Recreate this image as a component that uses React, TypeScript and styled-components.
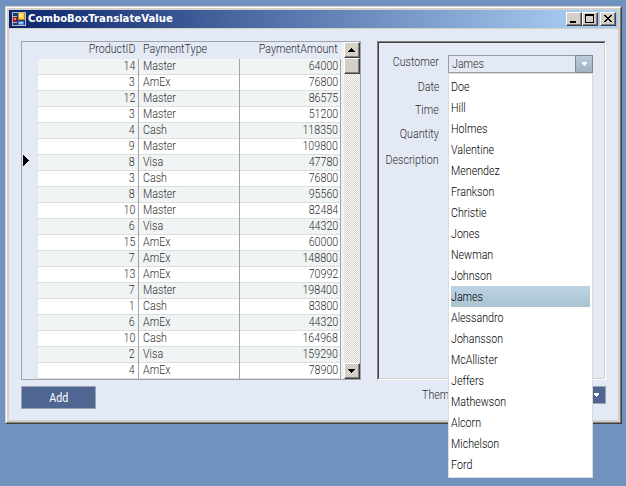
import React from 'react';
import styled, { createGlobalStyle, css } from 'styled-components';

const GlobalStyle = createGlobalStyle`
  * { box-sizing: border-box; }
  body {
    margin: 0;
    background: #7092bf;
    font-family: Roboto, "Liberation Sans", sans-serif;
    font-size: 12px;
    font-weight: 300;
    color: #303030;
    overflow: hidden;
  }
`;

const Desktop = styled.div`
  width: 626px;
  height: 486px;
  padding: 6px 0 0 5px;
  background: #7092bf;
`;

const WindowFrame = styled.div`
  width: 617px;
  height: 418px;
  border: 1px solid;
  border-color: #d4d0c8 #404040 #404040 #d4d0c8;
`;

const WindowBevel = styled.div`
  height: 100%;
  border: 1px solid;
  border-color: #ffffff #808080 #808080 #ffffff;
  padding: 2px;
  background: #d4d0c8;
`;

const TitleBar = styled.div`
  display: flex;
  align-items: center;
  height: 18px;
  padding: 0 2px 0 3px;
  background: linear-gradient(to right, #0a246a, #a6caf0 93%);
`;

const TitleText = styled.span`
  flex: 1;
  margin-left: 2px;
  white-space: nowrap;
  font: bold 11px/18px "DejaVu Sans", sans-serif;
  color: #ffffff;
  transform: scaleX(0.92);
  transform-origin: left;
`;

const raised = css`
  background: #d4d0c8;
  border: 1px solid;
  border-color: #ffffff #404040 #404040 #ffffff;
  box-shadow: inset -1px -1px 0 #808080;
`;

const CaptionButton = styled.div<{ $gap?: boolean }>`
  flex: none;
  width: 16px;
  height: 14px;
  margin-left: ${(p) => (p.$gap ? 2 : 0)}px;
  ${raised}
  svg { display: block; }
`;

const Client = styled.div`
  height: 391px;
  margin-top: 1px;
  padding: 12px;
  background: #e3e9f5;
`;

const Panels = styled.div`
  display: flex;
  justify-content: space-between;
  height: 339px;
`;

const Grid = styled.div`
  display: flex;
  width: 340px;
  border: 1px solid #9fa3ab;
`;

const RowHeader = styled.div`
  width: 16px;
  padding: 113px 0 0 1px;
  svg { display: block; }
`;

const Table = styled.div`
  width: 303px;
`;

const Line = styled.div<{ $head?: boolean; $alt?: boolean }>`
  display: grid;
  grid-template-columns: 101px 101px 101px;
  height: ${(p) => (p.$head ? 17 : 16)}px;
  background: ${(p) => (p.$head ? 'transparent' : p.$alt ? '#f0f4f5' : '#ffffff')};
`;

const Cell = styled.div<{ $right?: boolean; $head?: boolean; $end?: boolean }>`
  padding: 0 ${(p) => (p.$end ? 2 : 3)}px 0 4px;
  border-right: 1px solid ${(p) => (p.$head ? 'transparent' : '#a0a4a6')};
  text-align: ${(p) => (p.$right ? 'right' : 'left')};
  line-height: ${(p) => (p.$head ? 15 : 14)}px;
  ${(p) => !p.$head && 'box-shadow: inset 0 -1px 0 #dcdfdf;'}
`;

const Caption = styled.span<{ $from?: string; $x?: number }>`
  display: inline-block;
  white-space: nowrap;
  transform: scaleX(${(p) => p.$x ?? 0.89});
  transform-origin: ${(p) => p.$from ?? 'left'};
`;

const ScrollGutter = styled.div`
  width: 3px;
  background: #f1f1f1;
`;

const ScrollBar = styled.div`
  display: flex;
  flex-direction: column;
  width: 16px;
  background: repeating-conic-gradient(#d4d0c8 0 25%, #ffffff 0 50%) 0 0 / 2px 2px;
`;

const ScrollPart = styled.div<{ $last?: boolean }>`
  width: 16px;
  height: 16px;
  margin-top: ${(p) => (p.$last ? 'auto' : 0)};
  ${raised}
  svg { display: block; }
`;

const Details = styled.div`
  width: 229px;
  border: 1px solid;
  border-color: #808080 #ffffff #ffffff #808080;
`;

const DetailsInner = styled.div`
  position: relative;
  height: 100%;
  border: 1px solid;
  border-color: #404040 #d4d0c8 #d4d0c8 #404040;
  padding-top: 12px;
`;

const Field = styled.div<{ $h: number }>`
  display: flex;
  height: ${(p) => p.$h}px;
`;

const FieldLabel = styled.div`
  width: 60px;
  line-height: 14px;
  text-align: right;
`;

const Combo = styled.div`
  display: flex;
  width: 145px;
  height: 18px;
  margin-left: 9px;
  border: 1px solid #9a9da3;
`;

const ComboValue = styled.div`
  flex: 1;
  padding-left: 3px;
  line-height: 17px;
`;

const ComboArrow = styled.div`
  width: 18px;
  height: 18px;
  margin: -1px -1px 0 0;
  border: 1px solid #84898e;
  background: linear-gradient(#b9ccd8, #a0b4bf);
  svg { display: block; }
`;

const Menu = styled.div`
  position: absolute;
  left: 69px;
  top: 30px;
  z-index: 2;
  width: 145px;
  height: 405px;
  padding: 2px;
  border: 1px solid #dcdcdc;
  background: #ffffff;
  color: #000000;
`;

const MenuItem = styled.div<{ $selected: boolean }>`
  width: 139px;
  height: 21px;
  line-height: 23px;
  background: ${(p) => (p.$selected ? 'linear-gradient(#bed4e5, #aac3cf)' : 'transparent')};
`;

const Footer = styled.div`
  display: flex;
  margin-top: 6px;
`;

const AddButton = styled.div`
  width: 75px;
  height: 23px;
  border: 1px solid #9fa3ab;
  background: #4f6693;
  color: #ffffff;
  font-weight: 400;
  line-height: 22px;
  text-align: center;
`;

const ThemeLabel = styled.div`
  width: 360px;
  margin-left: auto;
  padding-left: 176px;
  line-height: 18px;
`;

const ThemeCombo = styled.div`
  display: flex;
  justify-content: flex-end;
  width: 149px;
  height: 18px;
  margin-left: -149px;
  border: 1px solid #9fa3ab;
`;

const ThemeArrow = styled.div`
  width: 17px;
  background: #4f6693;
  svg { display: block; }
`;

const rows: [number, string, number][] = [
  [14, 'Master', 64000], [3, 'AmEx', 76800], [12, 'Master', 86575], [3, 'Master', 51200],
  [4, 'Cash', 118350], [9, 'Master', 109800], [8, 'Visa', 47780], [3, 'Cash', 76800],
  [8, 'Master', 95560], [10, 'Master', 82484], [6, 'Visa', 44320], [15, 'AmEx', 60000],
  [7, 'AmEx', 148800], [13, 'AmEx', 70992], [7, 'Master', 198400], [1, 'Cash', 83800],
  [6, 'AmEx', 44320], [10, 'Cash', 164968], [2, 'Visa', 159290], [4, 'AmEx', 78900],
];

const customers = [
  'Doe', 'Hill', 'Holmes', 'Valentine', 'Menendez', 'Frankson', 'Christie', 'Jones', 'Newman',
  'Johnson', 'James', 'Alessandro', 'Johansson', 'McAllister', 'Jeffers', 'Mathewson', 'Alcorn',
  'Michelson', 'Ford',
];

const AppIcon = () => (
  <svg width="14" height="14" viewBox="0 0 14 14" shapeRendering="crispEdges">
    <path d="M0 0h14v14H0z" fill="#b4b9c4" />
    <path d="M1 1h4v3H1zM1 11h4v2H1z" fill="#1d3877" />
    <path d="M5 1h1v12H5zM6 8h7v1H6zM12 9h1v4h-1z" fill="#1d3877" />
    <path d="M6 1h7v7H6z" fill="#c68a12" />
    <path d="M7 1h5v6H7z" fill="#ffd047" />
    <path d="M7 2h3v3H7z" fill="#fff19b" />
    <path d="M1 5h4v5H1z" fill="#a11710" />
    <path d="M2 6h2v2H2z" fill="#f2897b" />
    <path d="M6 9h6v4H6z" fill="#4679cf" />
    <path d="M7 10h4v2H7z" fill="#9bc3fa" />
  </svg>
);

const ScrollArrow = ({ down }: { down?: boolean }) => (
  <svg width="14" height="14" shapeRendering="crispEdges">
    <path d={down ? 'M3 5h7v1H3zM4 6h5v1H4zM5 7h3v1H5zM6 8h1v1H6z' : 'M6 5h1v1H6zM5 6h3v1H5zM4 7h5v1H4zM3 8h7v1H3z'} fill="#000" />
  </svg>
);

const DropArrow = () => (
  <svg width="16" height="16" shapeRendering="crispEdges">
    <path d="M6 6h5v2H6zM7 8h3v1H7zM8 9h1v1H8z" fill="#fff" />
  </svg>
);

export default function App() {
  return (
    <Desktop>
      <GlobalStyle />
      <WindowFrame>
        <WindowBevel>
          <TitleBar>
            <AppIcon />
            <TitleText>ComboBoxTranslateValue</TitleText>
            <CaptionButton>
              <svg width="14" height="12"><path d="M3 8h6v2H3z" fill="#000" /></svg>
            </CaptionButton>
            <CaptionButton>
              <svg width="14" height="12" shapeRendering="crispEdges">
                <path fillRule="evenodd" d="M2 1h9v9H2zM3 3v6h7V3z" fill="#000" />
              </svg>
            </CaptionButton>
            <CaptionButton $gap>
              <svg width="14" height="12" shapeRendering="crispEdges">
                <path d="M3 2h2v1H3zM9 2h2v1H9zM4 3h2v1H4zM8 3h2v1H8zM5 4h4v1H5zM6 5h2v1H6zM5 6h4v1H5zM4 7h2v1H4zM8 7h2v1H8zM3 8h2v1H3zM9 8h2v1H9z" fill="#000" />
              </svg>
            </CaptionButton>
          </TitleBar>
          <Client>
            <Panels>
              <Grid>
                <RowHeader>
                  <svg width="6" height="11" shapeRendering="crispEdges"><path d="M0 0L6 5.5L0 11z" fill="#000" /></svg>
                </RowHeader>
                <Table>
                  <Line $head>
                    <Cell $head $right><Caption $from="right">ProductID</Caption></Cell>
                    <Cell $head><Caption>PaymentType</Caption></Cell>
                    <Cell $head $right $end><Caption $from="right">PaymentAmount</Caption></Cell>
                  </Line>
                  {rows.map(([id, type, amount], i) => (
                    <Line key={i} $alt={i % 2 === 0}>
                      <Cell $right><Caption $from="right">{id}</Caption></Cell>
                      <Cell><Caption>{type}</Caption></Cell>
                      <Cell $right $end><Caption $from="right">{amount}</Caption></Cell>
                    </Line>
                  ))}
                </Table>
                <ScrollGutter />
                <ScrollBar>
                  <ScrollPart><ScrollArrow /></ScrollPart>
                  <ScrollPart />
                  <ScrollPart $last><ScrollArrow down /></ScrollPart>
                </ScrollBar>
              </Grid>
              <Details>
                <DetailsInner>
                  <Field $h={25}>
                    <FieldLabel><Caption $from="right">Customer</Caption></FieldLabel>
                    <Combo>
                      <ComboValue><Caption>James</Caption></ComboValue>
                      <ComboArrow><DropArrow /></ComboArrow>
                    </Combo>
                  </Field>
                  <Field $h={23}><FieldLabel><Caption $from="right">Date</Caption></FieldLabel></Field>
                  <Field $h={24}><FieldLabel><Caption $from="right">Time</Caption></FieldLabel></Field>
                  <Field $h={26}><FieldLabel><Caption $from="right">Quantity</Caption></FieldLabel></Field>
                  <Field $h={20}><FieldLabel><Caption $from="right">Description</Caption></FieldLabel></Field>
                  <Menu>
                    {customers.map((name) => (
                      <MenuItem key={name} $selected={name === 'James'}><Caption>{name}</Caption></MenuItem>
                    ))}
                  </Menu>
                </DetailsInner>
              </Details>
            </Panels>
            <Footer>
              <AddButton><Caption $from="center">Add</Caption></AddButton>
              <ThemeLabel><Caption>Theme</Caption></ThemeLabel>
              <ThemeCombo><ThemeArrow><DropArrow /></ThemeArrow></ThemeCombo>
            </Footer>
          </Client>
        </WindowBevel>
      </WindowFrame>
    </Desktop>
  );
}
